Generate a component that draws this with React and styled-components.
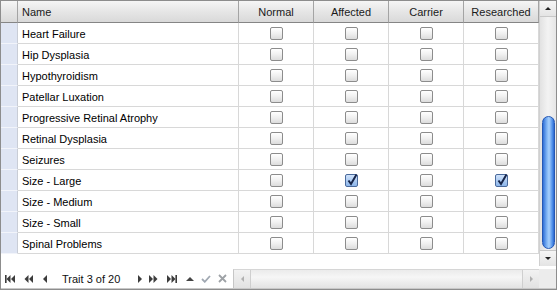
import React from 'react';
import styled, { createGlobalStyle } from 'styled-components';

const Global = createGlobalStyle`
  html, body { margin: 0; padding: 0; background: #fff; }
  body { font-family: "Liberation Sans", Arial, sans-serif; font-size: 11px; color: #000; }
`;

const COLS = '17px 221px repeat(4, 75px)';

const Frame = styled.div`
  width: 557px;
  height: 290px;
  box-sizing: border-box;
  border: 1px solid #8d8d8d;
  display: grid;
  grid-template-rows: 265px 1fr;
  background: #fff;
  overflow: hidden;
`;

const Top = styled.div`
  display: grid;
  grid-template-columns: 538px 17px;
`;

const Table = styled.div`
  display: flex;
  flex-direction: column;
`;

const Row = styled.div`
  display: grid;
  grid-template-columns: ${COLS};
  height: ${(p) => (p.$head ? 22 : 21)}px;
`;

const HeadCell = styled.div`
  box-sizing: border-box;
  background: linear-gradient(#f6f6f6, #e6e6e6 50%, #d9d9d9);
  border-right: 1px solid #a4a4a4;
  border-bottom: 1px solid #858585;
  display: flex;
  align-items: center;
  justify-content: ${(p) => (p.$left ? 'flex-start' : 'center')};
  padding-left: ${(p) => (p.$left ? '4px' : '0')};
  color: #1a1a1a;
`;

const RowHead = styled.div`
  box-sizing: border-box;
  background: #dfe5f3;
  border-right: 1px solid #c9cdd6;
  border-bottom: 1px solid #f2f4fa;
`;

const Cell = styled.div`
  box-sizing: border-box;
  border-right: 1px solid #d8d8d8;
  border-bottom: 1px solid #d8d8d8;
  display: flex;
  align-items: center;
  justify-content: ${(p) => (p.$left ? 'flex-start' : 'center')};
  padding-left: ${(p) => (p.$left ? '4px' : '0')};
  padding-top: 1px;
`;

const Box = styled.span`
  width: 13px;
  height: 13px;
  box-sizing: border-box;
  border: 1px solid ${(p) => (p.$on ? '#4a6a9c' : '#8c8c8c')};
  border-radius: 2px;
  background: ${(p) =>
    p.$on ? 'linear-gradient(#cfe2fb, #8db6ea)' : 'linear-gradient(#ffffff, #f0f0f0 50%, #dcdcdc)'};
  position: relative;
  display: block;
`;

const Check = styled.svg`
  position: absolute;
  left: 1px;
  top: -2px;
`;

const VScroll = styled.div`
  display: grid;
  grid-template-rows: 16px 1fr 16px;
  background: linear-gradient(90deg, #e2e2e2, #f3f3f3 50%, #e6e6e6);
  border-left: 1px solid #d0d0d0;
`;

const Track = styled.div`
  display: flex;
  flex-direction: column;
  justify-content: flex-end;
  padding: 0 1px 1px 2px;
`;

const Thumb = styled.div`
  height: 131px;
  border: 1px solid #2558b4;
  border-radius: 7px;
  background: linear-gradient(90deg, #2f6fd8, #7fb4f4 35%, #a8d0fc 55%, #4f8fe8 85%, #2d68cf);
`;

const ArrowBtn = styled.div`
  display: flex;
  align-items: center;
  justify-content: center;
  background: linear-gradient(#f6f6f6, #e4e4e4);
  border-top: ${(p) => (p.$bottom ? '1px solid #c8c8c8' : 'none')};
  border-bottom: ${(p) => (p.$bottom ? 'none' : '1px solid #c8c8c8')};
`;

const Bottom = styled.div`
  display: grid;
  grid-template-columns: 232px 306px 17px;
  padding-top: 3px;
  border-bottom: 1px solid #c8c8c8;
`;

const Nav = styled.div`
  display: flex;
  align-items: center;
  padding-left: 4px;
`;

const NavBtn = styled.div`
  width: ${(p) => p.$w}px;
  flex: none;
  display: flex;
  align-items: center;
  justify-content: center;
`;

const Label = styled.div`
  width: 84px;
  flex: none;
  padding-left: 13px;
  box-sizing: border-box;
  font-size: 11px;
  color: #111;
`;

const HScroll = styled.div`
  display: grid;
  grid-template-columns: 17px 1fr 17px;
  background: linear-gradient(#ebebeb, #f6f6f6 40%, #e3e3e3);
  border-left: 1px solid #c6c6c6;
  border-top: 1px solid #d6d6d6;
`;

const HArrow = styled.div`
  display: flex;
  align-items: center;
  justify-content: center;
  border-left: ${(p) => (p.$right ? '1px solid #cfcfcf' : 'none')};
  border-right: ${(p) => (p.$right ? 'none' : '1px solid #cfcfcf')};
  background: linear-gradient(#f2f2f2, #e2e2e2);
`;

const Corner = styled.div`
  background: #ececec;
`;

const rows = [
  ['Heart Failure'],
  ['Hip Dysplasia'],
  ['Hypothyroidism'],
  ['Patellar Luxation'],
  ['Progressive Retinal Atrophy'],
  ['Retinal Dysplasia'],
  ['Seizures'],
  ['Size - Large', [1, 3]],
  ['Size - Medium'],
  ['Size - Small'],
  ['Spinal Problems'],
];

const CheckBox = ({ on }) => (
  <Box $on={on}>
    {on && (
      <Check width="11" height="13" viewBox="0 0 11 13">
        <path d="M1.5 7.5 L4 11 L9.5 1.5" fill="none" stroke="#17264a" strokeWidth="2" />
      </Check>
    )}
  </Box>
);

const Tri = ({ dir = 'left', color = '#333', size = 4 }) => {
  const s = size;
  const pts = {
    left: `${s},0 ${s},${2 * s} 0,${s}`,
    right: `0,0 0,${2 * s} ${s},${s}`,
    up: `0,${s} ${2 * s},${s} ${s},0`,
    down: `0,0 ${2 * s},0 ${s},${s}`,
  }[dir];
  const w = dir === 'left' || dir === 'right' ? s : 2 * s;
  const h = dir === 'left' || dir === 'right' ? 2 * s : s;
  return (
    <svg width={w} height={h} viewBox={`0 0 ${w} ${h}`}>
      <polygon points={pts} fill={color} />
    </svg>
  );
};

const Icon = ({ kind }) => {
  const c = '#3c3c3c';
  switch (kind) {
    case 'first':
      return (
        <svg width="10" height="8" viewBox="0 0 10 8">
          <rect x="0" y="0" width="1.6" height="8" fill={c} />
          <polygon points="5.5,0 5.5,8 1.5,4" fill={c} />
          <polygon points="10,0 10,8 6,4" fill={c} />
        </svg>
      );
    case 'prevPage':
      return (
        <svg width="9" height="8" viewBox="0 0 9 8">
          <polygon points="4.5,0 4.5,8 0.5,4" fill={c} />
          <polygon points="9,0 9,8 5,4" fill={c} />
        </svg>
      );
    case 'prev':
      return <Tri dir="left" color={c} />;
    case 'next':
      return <Tri dir="right" color={c} />;
    case 'nextPage':
      return (
        <svg width="9" height="8" viewBox="0 0 9 8">
          <polygon points="0,0 0,8 4,4" fill={c} />
          <polygon points="4.5,0 4.5,8 8.5,4" fill={c} />
        </svg>
      );
    case 'last':
      return (
        <svg width="10" height="8" viewBox="0 0 10 8">
          <polygon points="0,0 0,8 4,4" fill={c} />
          <polygon points="4.5,0 4.5,8 8.5,4" fill={c} />
          <rect x="8.4" y="0" width="1.6" height="8" fill={c} />
        </svg>
      );
    case 'up':
      return <Tri dir="up" color="#444" />;
    case 'ok':
      return (
        <svg width="10" height="8" viewBox="0 0 10 8">
          <path d="M1 4 L3.8 6.8 L9 1" fill="none" stroke="#a0a8b2" strokeWidth="1.8" />
        </svg>
      );
    case 'cancel':
      return (
        <svg width="9" height="9" viewBox="0 0 9 9">
          <path d="M1 1 L8 8 M8 1 L1 8" fill="none" stroke="#9ea2a6" strokeWidth="1.8" />
        </svg>
      );
    default:
      return null;
  }
};

export default function App() {
  return (
    <>
      <Global />
      <Frame>
        <Top>
          <Table>
            <Row $head>
              <HeadCell />
              <HeadCell $left>Name</HeadCell>
              <HeadCell>Normal</HeadCell>
              <HeadCell>Affected</HeadCell>
              <HeadCell>Carrier</HeadCell>
              <HeadCell>Researched</HeadCell>
            </Row>
            {rows.map(([name, on = []]) => (
              <Row key={name}>
                <RowHead />
                <Cell $left>{name}</Cell>
                {[0, 1, 2, 3].map((i) => (
                  <Cell key={i}>
                    <CheckBox on={on.includes(i)} />
                  </Cell>
                ))}
              </Row>
            ))}
          </Table>
          <VScroll>
            <ArrowBtn>
              <Tri dir="up" color="#222" size={3} />
            </ArrowBtn>
            <Track>
              <Thumb />
            </Track>
            <ArrowBtn $bottom>
              <Tri dir="down" color="#222" size={3} />
            </ArrowBtn>
          </VScroll>
        </Top>
        <Bottom>
          <Nav>
            <NavBtn $w={10}><Icon kind="first" /></NavBtn>
            <NavBtn $w={26}><Icon kind="prevPage" /></NavBtn>
            <NavBtn $w={8}><Icon kind="prev" /></NavBtn>
            <Label>Trait 3 of 20</Label>
            <NavBtn $w={13}><Icon kind="next" /></NavBtn>
            <NavBtn $w={14}><Icon kind="nextPage" /></NavBtn>
            <NavBtn $w={23}><Icon kind="last" /></NavBtn>
            <NavBtn $w={14}><Icon kind="up" /></NavBtn>
            <NavBtn $w={18}><Icon kind="ok" /></NavBtn>
            <NavBtn $w={15}><Icon kind="cancel" /></NavBtn>
          </Nav>
          <HScroll>
            <HArrow>
              <Tri dir="left" color="#b0b0b0" size={3} />
            </HArrow>
            <div />
            <HArrow $right>
              <Tri dir="right" color="#b0b0b0" size={3} />
            </HArrow>
          </HScroll>
          <Corner />
        </Bottom>
      </Frame>
    </>
  );
}
